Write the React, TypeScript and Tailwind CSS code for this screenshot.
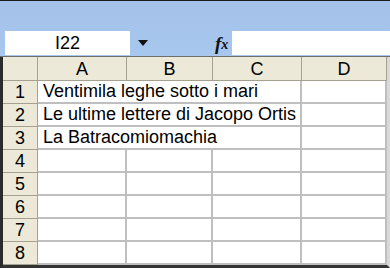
const columns = ['A', 'B', 'C', 'D'];

const rows: { n: number; text?: string }[] = [
  { n: 1, text: 'Ventimila leghe sotto i mari' },
  { n: 2, text: 'Le ultime lettere di Jacopo Ortis' },
  { n: 3, text: 'La Batracomiomachia' },
  { n: 4 },
  { n: 5 },
  { n: 6 },
  { n: 7 },
  { n: 8 },
];

const headCell = 'flex items-center justify-center bg-[#ece9d8] border-r border-b border-[#a5a191] text-[18px] leading-none text-black';
const dataCell = 'bg-white border-r-2 border-b-2 border-[#bfbfbf]';

export default function App() {
  return (
    <div className="w-[390px] h-[268px] overflow-hidden flex flex-col bg-white font-['Liberation_Sans',Arial,sans-serif]">
      {/* formula bar */}
      <div className="h-[57px] shrink-0 border-t border-b border-t-[#1c1c1c] border-b-[#6f6f6a] bg-gradient-to-b from-[#a3c1e9] to-[#a8c7ee] pt-[30px]">
        <div className="flex h-[24px]">
          <div className="ml-[5px] w-[125px] bg-white flex items-center justify-center text-[18px] text-black">
            I22
          </div>
          <div className="w-[85px] flex items-center pl-[8px]">
            <svg width="10" height="6" viewBox="0 0 10 6">
              <path d="M0 0 L10 0 L5 6 Z" fill="#111" />
            </svg>
          </div>
          <div className="w-[17px] flex items-center font-['Liberation_Serif',serif] italic text-[#111] leading-none">
            <span className="text-[19px] font-bold">f</span>
            <span className="text-[14px] font-bold mt-[4px]">x</span>
          </div>
          <div className="flex-1 bg-white" />
        </div>
      </div>

      {/* sheet */}
      <div className="flex-1 border-l-[3px] border-l-[#2b2b2b] border-r-[3px] border-r-[#d9d9d9] border-b-[3px] border-b-[#333333] grid grid-cols-[35px_89px_86px_89px_1fr] grid-rows-[24px_repeat(8,23px)]">
        <div className={headCell} />
        {columns.map((c) => (
          <div key={c} className={headCell}>
            {c}
          </div>
        ))}

        {rows.map((r) => (
          <div key={r.n} className="contents">
            <div className={headCell}>{r.n}</div>
            {r.text ? (
              <div className={`${dataCell} col-span-3 flex items-center pl-[5px] text-[18px] whitespace-nowrap text-black`}>
                {r.text}
              </div>
            ) : (
              <>
                <div className={dataCell} />
                <div className={dataCell} />
                <div className={dataCell} />
              </>
            )}
            <div className={dataCell} />
          </div>
        ))}
      </div>
    </div>
  );
}
